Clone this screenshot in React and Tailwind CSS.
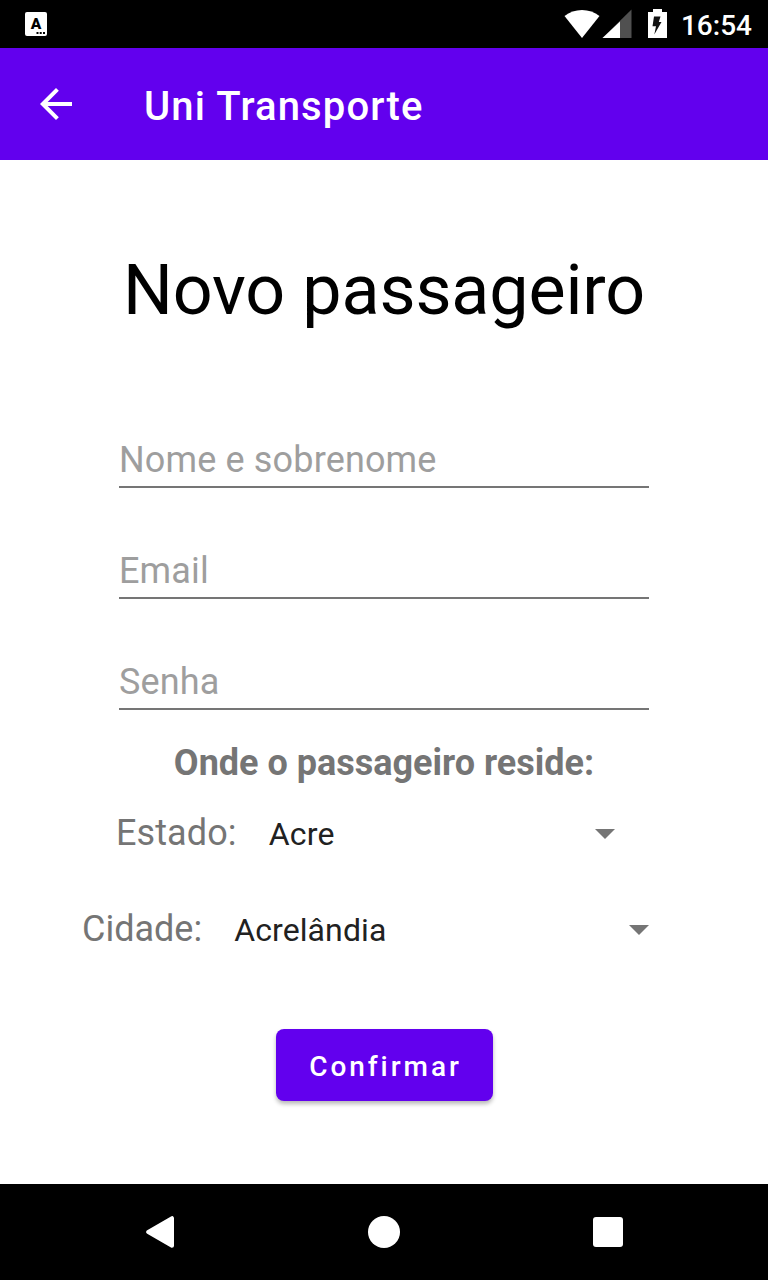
function Field({ label }) {
  return (
    <div className="mx-auto flex h-[111px] w-[530px] shrink-0 flex-col justify-end">
      <div className="pb-[5px] text-[36px] leading-[42px] tracking-[0.15px] text-[#9e9e9e]">{label}</div>
      <div className="h-[2px] bg-[#757575]" />
    </div>
  );
}

function Arrow() {
  return (
    <svg className="h-[10px] w-5" viewBox="0 0 20 10"><path d="M0 0h20L10 10z" fill="#757575" /></svg>
  );
}

export default function App() {
  return (
    <div className="flex h-[1280px] w-[768px] flex-col overflow-hidden bg-white font-['Roboto',sans-serif] text-black">
      <header className="flex h-12 shrink-0 items-center justify-between bg-black pl-[25px] pr-4 text-white">
        <svg className="h-6 w-[22px]" viewBox="0 0 22 24">
          <rect width="22" height="24" rx="2" fill="#fff" />
          <text x="11" y="17" textAnchor="middle" fontSize="15.500" fontWeight="900" fill="#000">A</text>
          <path d="M11.500 20h2v2h-2zM14.700 20h2v2h-2zM18 20h2v2h-2z" fill="#000" />
        </svg>
        <div className="flex items-center">
          <svg className="h-12 w-[106px]" viewBox="562 0 106 48">
            <path d="M564.500 16C574 8 590 8 599.500 16L582 38z" fill="#fff" />
            <path d="M631.500 9.500v28.500h-29z" fill="#505050" />
            <path d="M620 21.500v16.500h-17.500z" fill="#fff" />
            <path d="M653 9h9v3h5v26h-19V12h5z" fill="#fff" />
            <path d="M654 16.500h6.500l-1.700 5.500h2.700L654.300 34.500l1.700-8.300h-3.500z" fill="#111" />
          </svg>
          <span className="ml-[13px] pt-[3px] text-[28px] leading-8 font-medium">16:54</span>
        </div>
      </header>
      <div className="flex h-28 shrink-0 items-center bg-[#6200ee] pl-10 text-white">
        <svg className="h-8 w-8" viewBox="4 4 16 16"><path d="M20 11H7.830l5.590-5.590L12 4l-8 8 8 8 1.410-1.410L7.830 13H20z" fill="#fff" /></svg>
        <h1 className="ml-[72px] pt-[5px] text-[40px] font-medium tracking-[1.150px]">Uni Transporte</h1>
      </div>
      <main className="flex h-[1024px] shrink-0 flex-col">
        <h2 className="mt-[88px] h-[84px] text-center text-[70px] leading-[84px] tracking-[-0.150px]">Novo passageiro</h2>
        <div className="-mt-[4px] flex flex-col pb-[30px]">
          <div className="h-[49px]" />
          <Field label="Nome e sobrenome" />
          <Field label="Email" />
          <Field label="Senha" />
        </div>
        <div className="h-[46px] text-center text-[36px] leading-[46px] font-bold text-[#757575]">Onde o passageiro reside:</div>
        <div className="mt-[23px] flex h-12 items-center pl-[116px] pr-[153px]">
          <span className="text-[36px] tracking-[0.100px] text-[#757575]">Estado:</span>
          <span className="ml-[32px] grow pt-[2px] text-[32px] tracking-[0.200px] text-[#212121]">Acre</span>
          <div className="pt-[2px]"><Arrow /></div>
        </div>
        <div className="mt-12 flex h-12 items-center pl-[82px] pr-[119px]">
          <span className="text-[36px] text-[#757575]">Cidade:</span>
          <span className="ml-[32px] grow pt-[2px] text-[32px] tracking-[0.100px] text-[#212121]">Acrelândia</span>
          <div className="pt-[2px]"><Arrow /></div>
        </div>
        <button className="mx-auto mt-[76px] h-[72px] w-[217px] rounded-[8px] bg-[#6200ee] pt-[3px] pl-[3px] text-[28px] font-medium tracking-[2.950px] text-white shadow-[0_3px_4px_rgba(0,0,0,0.28)]">Confirmar</button>
      </main>
      <nav className="flex h-24 shrink-0 items-center justify-between bg-black px-[144px]">
        <svg className="h-8 w-8" viewBox="0 0 32 32"><path d="M4.200 16L28 2.200v27.600z" fill="#fff" stroke="#fff" strokeWidth="4" strokeLinejoin="round" /></svg>
        <div className="h-8 w-8 rounded-full bg-white" />
        <div className="w-8 pl-px"><div className="h-[30px] w-[30px] rounded-[3px] bg-white" /></div>
      </nav>
    </div>
  );
}
